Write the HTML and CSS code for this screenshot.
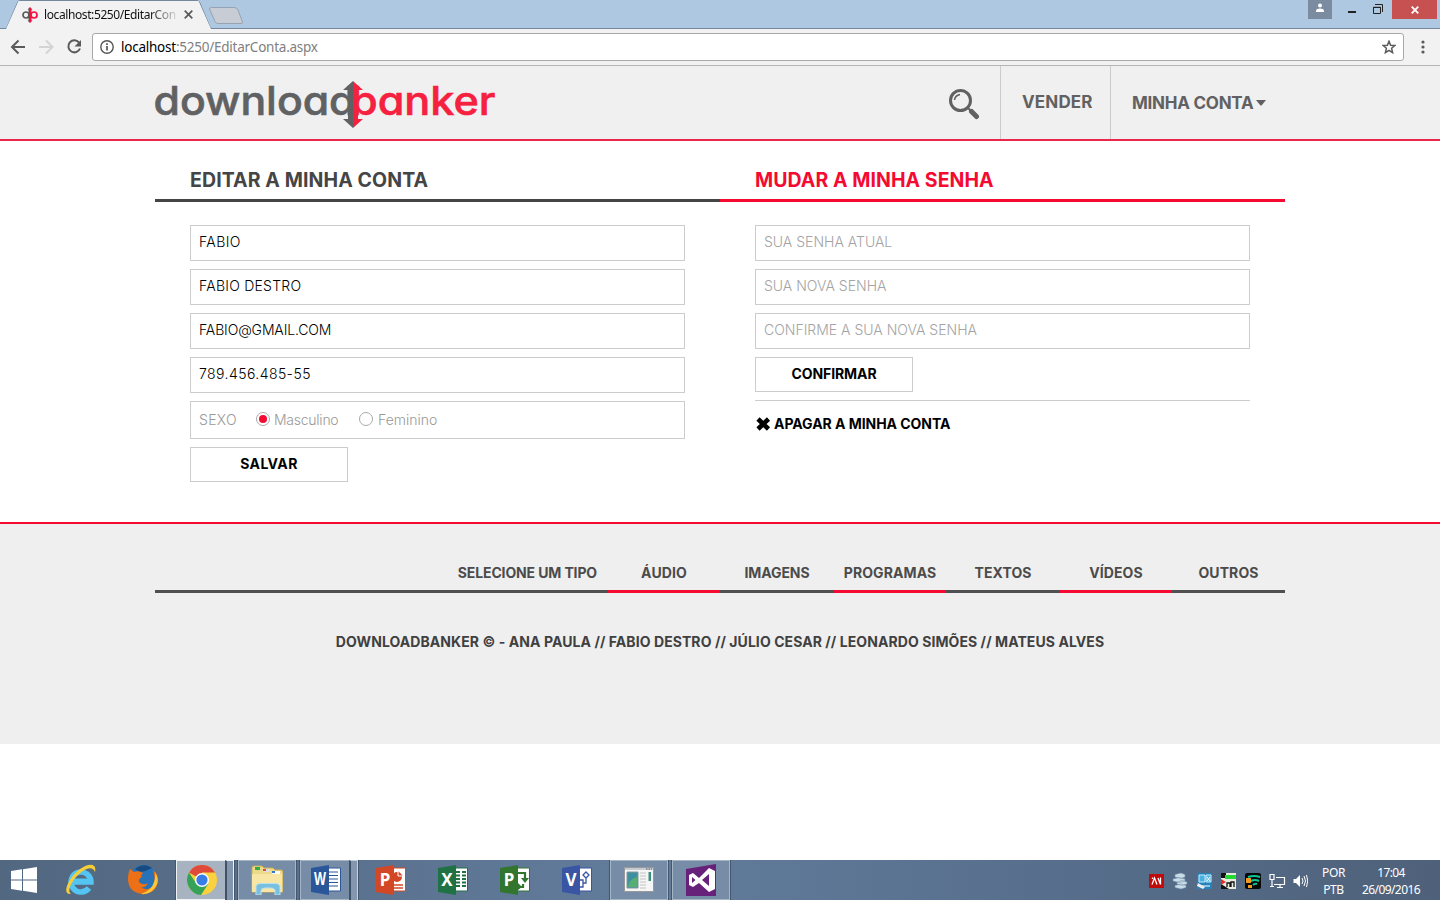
FILE: index.html
```html
<!DOCTYPE html>
<html lang="pt-BR">
<head>
<meta charset="utf-8">
<title>Editar Conta</title>
<link rel="stylesheet" href="styles.css">
</head>
<body>
<div class="tabstrip">
  <svg class="tabshape" width="250" height="29" viewBox="0 0 250 29"><path d="M0 28.5H5.500Q6.500 28.500 7 27L17.500 2.500Q18 .5 20 .5H197Q199 .5 199.700 2.500L210 27Q210.500 28.500 212 28.500H250" fill="none" stroke="#75869f"/><path d="M0 29H6L18.500 1H198.500L211 29Z" fill="#f2f2f2"/><path d="M211.500 7.500H234Q237 7.500 238 10L242.500 22Q243 23.500 241 23.500H218Q216 23.500 215 21.500L209.500 9Q209 7.500 211.500 7.500Z" fill="#c7ccd5" stroke="#97a2b3"/></svg>
  <div class="tab">
    <svg class="fav" width="16" height="16" viewBox="0 0 16 16"><circle cx="4" cy="8" r="3" fill="none" stroke="#58595b" stroke-width="1.700"/><circle cx="12" cy="8" r="3" fill="none" stroke="#f5123f" stroke-width="1.700"/><path d="M8 0L5.500 2.500H6.500V13.500H5.500L8 16Z" fill="#58595b"/><path d="M8 0L10.500 2.500H9.500V13.500H10.500L8 16Z" fill="#f5123f"/></svg>
    <span class="tabtitle">localhost:5250/EditarCon</span>
    <svg width="9" height="9" viewBox="0 0 9 9"><path d="M.7.7L8.300 8.300M8.300.7L.7 8.300" stroke="#5a5a5a" stroke-width="1.700"/></svg>
  </div>
  <div class="winbtns">
    <span class="user"><svg width="10" height="10" viewBox="0 0 10 10"><circle cx="5" cy="2.500" r="2" fill="#fff"/><path d="M1 9V7.500Q1.500 5.500 5 5.500T9 7.500V9Z" fill="#fff"/></svg></span>
    <svg width="60" height="19" viewBox="0 0 60 19"><path d="M16 12h8" stroke="#222" stroke-width="2"/><path d="M41.500 7.500h7v6h-7zM41 7.300h8M43 4.500H50.500V12" fill="none" stroke="#222"/></svg>
    <span class="close"><svg width="8" height="8" viewBox="0 0 8 8"><path d="M.7.7L7.300 7.300M7.300.7L.7 7.300" stroke="#fff" stroke-width="1.800"/></svg></span>
  </div>
</div>
<div class="toolbar">
  <svg width="84" height="20" viewBox="0 0 84 20" fill="none" stroke-width="2"><path d="M25 10H12.500M18.500 3.500L12 10L18.500 16.500" stroke="#5a5a5a"/><path d="M39 10H52M46 3.500L52.500 10L46 16.500" stroke="#d4d4d4"/><path d="M79 5.500A6 6 0 1 0 80 11.500" stroke="#5a5a5a"/><path d="M81 3V9.500H74.500Z" fill="#5a5a5a"/></svg>
  <div class="address">
    <svg width="14" height="14" viewBox="0 0 14 14"><circle cx="7" cy="7" r="6.200" fill="none" stroke="#555" stroke-width="1.400"/><path d="M7 6v4.500M7 3.300V4.900" stroke="#555" stroke-width="1.700"/></svg>
    <span class="url">localhost<i>:5250/EditarConta.aspx</i></span>
    <svg width="14" height="14" viewBox="0 0 14 14"><path d="M7 1.300L8.600 5.200L12.900 5.500L9.600 8.300L10.600 12.600L7 10.300L3.400 12.600L4.400 8.300L1.100 5.500L5.400 5.200Z" fill="none" stroke="#5a5a5a" stroke-width="1.500"/></svg>
  </div>
  <svg class="menu" width="4" height="14" viewBox="0 0 4 14" fill="#5a5a5a"><circle cx="2" cy="2" r="1.600"/><circle cx="2" cy="7" r="1.600"/><circle cx="2" cy="12" r="1.600"/></svg>
</div>

<header class="header"><div class="wrap head">
  <svg class="logo" width="345" height="73" viewBox="155 66 345 73">
    <text class="logotext" x="153.500" y="115" textLength="202" lengthAdjust="spacingAndGlyphs" fill="#606163" stroke="#606163">download</text>
    <text class="logotext" x="351" y="115" textLength="144.500" lengthAdjust="spacingAndGlyphs" fill="#f6203f" stroke="#f6203f">banker</text>
    <path d="M353 81L343 90H348V119H343L353 128Z" fill="#606163"/><path d="M353 81L363 90H358V119H363L353 128Z" fill="#f6203f"/>
  </svg>
  <nav class="topnav">
    <a class="search"><svg width="32" height="32" viewBox="0 0 32 32"><circle cx="12.500" cy="12.500" r="10" fill="none" stroke="#616161" stroke-width="3"/><path d="M6.500 12Q7 7.500 12 6.500" fill="none" stroke="#616161" stroke-width="1.600"/><path d="M20 20L23 23" stroke="#616161" stroke-width="2"/><path d="M23.500 23.500L28.500 28.500" stroke="#616161" stroke-width="5" stroke-linecap="round"/></svg></a>
    <a class="sell">VENDER</a>
    <a class="account"><span>MINHA CONTA</span><svg width="10" height="6" viewBox="0 0 10 6"><path d="M0 0H10L5.500 5.500H4.500Z" fill="#616161"/></svg></a>
  </nav>
</div></header>

<main class="wrap cols">
  <section class="col">
    <h2 class="t1"><span>EDITAR A MINHA CONTA</span></h2>
    <form class="form">
      <input class="i1" value="FABIO">
      <input class="i2" value="FABIO DESTRO">
      <input class="i3" value="FABIO@GMAIL.COM">
      <input class="i4" value="789.456.485-55">
      <div class="sex"><span class="lab">SEXO</span><span class="radio on"></span><span class="masc">Masculino</span><span class="radio"></span><span class="fem">Feminino</span></div>
      <button type="button" class="save">SALVAR</button>
    </form>
  </section>
  <section class="col">
    <h2 class="t2"><span>MUDAR A MINHA SENHA</span></h2>
    <form class="form">
      <input class="i5" placeholder="SUA SENHA ATUAL">
      <input class="i6" placeholder="SUA NOVA SENHA">
      <input class="i7" placeholder="CONFIRME A SUA NOVA SENHA">
      <button type="button" class="confirm">CONFIRMAR</button>
      <div class="delete"><svg width="16" height="14" viewBox="0 0 16 14"><path d="M3 2L13.500 12M13.500 2L3 12" stroke="#000" stroke-width="4.600"/></svg><span>APAGAR A MINHA CONTA</span></div>
    </form>
  </section>
</main>

<footer class="footer"><div class="wrap">
  <nav class="types"><a class="f0"><span>SELECIONE UM TIPO</span></a><a class="f1"><span>ÁUDIO</span></a><a class="f2"><span>IMAGENS</span></a><a class="f3"><span>PROGRAMAS</span></a><a class="f4"><span>TEXTOS</span></a><a class="f5"><span>VÍDEOS</span></a><a class="f6"><span>OUTROS</span></a></nav>
  <p class="credits">DOWNLOADBANKER © - ANA PAULA // FABIO DESTRO // JÚLIO CESAR // LEONARDO SIMÕES // MATEUS ALVES</p>
</div></footer>

<div class="taskbar">
  <div class="apps">
    <span class="app start"><svg width="26" height="26" viewBox="0 0 26 26" fill="#fff"><path d="M0 4L11 2.300V12.500H0ZM12 2.200L26 0V12.500H12ZM0 13.500H11V23.700L0 22ZM12 13.500H26V26L12 23.800Z"/></svg></span>
    <span class="app"><svg width="32" height="32" viewBox="0 0 32 32"><path d="M8 18H26A10 10 0 1 0 24 24" fill="none" stroke="#54c5f2" stroke-width="5.500"/><path d="M8 16.500H26" stroke="#54c5f2" stroke-width="4"/><path d="M6 30C-4 31 3 14 15 5C24-1 32-1 30 8C28 2 22 4 17 7.500C8 14 1 27 6 30Z" fill="#f8ce37"/></svg></span>
    <span class="app"><svg width="32" height="32" viewBox="0 0 32 32"><circle cx="16.500" cy="14" r="13" fill="#2872b8"/><path d="M8 5Q17-2 25 4Q20 7 13 8Z" fill="#174b82"/><path d="M3 5L7 8Q12 6 16 9Q13 12 15 13Q11 15 12 18Q16 22 21 19Q19 24 14 23Q21 28 26 22Q29 15 26 6Q32 11 31 19Q28 30 16 30Q2 29 1 16Q1 9 3 5Z" fill="#ed7016"/><path d="M28 8Q34 17 27 25Q22 31 14 30Q25 26 27 18Q29 13 28 8Z" fill="#fbc638"/></svg></span>
    <span class="app active stack"><svg width="30" height="30" viewBox="0 0 30 30"><circle cx="15" cy="15" r="15" fill="#fbd23d"/><path d="M15 15L2 7.500A15 15 0 0 1 28 7.500H15Z" fill="#e04a3b"/><path d="M2 7.500A15 15 0 0 0 14 30L21.500 18.500L15 20L9 18Z" fill="#36a257"/><circle cx="15" cy="15" r="7" fill="#fff"/><circle cx="15" cy="15" r="5.600" fill="#397ee8"/></svg></span>
    <span class="app open"><svg width="32" height="30" viewBox="0 0 32 30"><path d="M1 3Q1 1 3 1H11L13 3H22L24 5H30Q32 5 32 7V27H1Z" fill="#ecd98a" stroke="#c9ad56"/><path d="M4 2H9V5H4Z" fill="#2fae45"/><path d="M12 4H19V7H12Z" fill="#ddd"/><path d="M12 4H15V6H12Z" fill="#dd4932"/><path d="M21 6H29V9H21Z" fill="#fff"/><path d="M21 6H24V8H21Z" fill="#3378c8"/><path d="M1 9H31V27H1Z" fill="#f7e6a4"/><path d="M5 30V21Q6 18.500 9 18.500H25Q28 18.500 29 21V30H24V25Q23 23 20 23H14Q10 23 10 26V30Z" fill="#79bfdf" stroke="#b9e2f1"/></svg></span>
    <span class="app open stack"><svg class="office" width="30" height="30" viewBox="0 0 30 30"><path d="M17 3H29.500V26H17Z" fill="#fff" stroke="#2a579a"/><path d="M18 7H27M18 10.500H27M18 14H27M18 17.500H27M18 21H27" stroke="#2a579a" stroke-width="1.200"/><path d="M0 3L18 0V30L0 27Z" fill="#2a579a"/><text x="9" y="20" textLength="12" lengthAdjust="spacingAndGlyphs">W</text></svg></span>
    <span class="app"><svg class="office" width="30" height="30" viewBox="0 0 30 30"><path d="M17 3H29.500V26H17Z" fill="#fff" stroke="#d24726"/><circle cx="21" cy="12" r="5" fill="#d24726"/><path d="M22 6V11H27" fill="#d24726" stroke="#fff"/><path d="M18 20H27M18 23H27" stroke="#d24726" stroke-width="1.500"/><path d="M0 3L18 0V30L0 27Z" fill="#d24726"/><text x="9" y="21">P</text></svg></span>
    <span class="app"><svg class="office" width="30" height="30" viewBox="0 0 30 30"><path d="M17 3H29.500V26H17Z" fill="#fff" stroke="#207245"/><path d="M18 7H22M24 7H28M18 10.500H22M24 10.500H28M18 14H22M24 14H28M18 17.500H22M24 17.500H28M18 21H22M24 21H28" stroke="#207245" stroke-width="2"/><path d="M0 3L18 0V30L0 27Z" fill="#207245"/><text x="9" y="21">X</text></svg></span>
    <span class="app"><svg class="office" width="30" height="30" viewBox="0 0 30 30"><path d="M17 3H29.500V26H17Z" fill="#fff" stroke="#31752f"/><path d="M18 8H25V14M18 22H23V19" fill="none" stroke="#31752f" stroke-width="2.200"/><path d="M21 13H29L25 18ZM18 18L22 22L18 25Z" fill="#31752f"/><path d="M0 3L18 0V30L0 27Z" fill="#31752f"/><text x="9" y="21">P</text></svg></span>
    <span class="app"><svg class="office" width="30" height="30" viewBox="0 0 30 30"><path d="M17 3H29.500V26H17Z" fill="#fff" stroke="#3955a3"/><path d="M24 7L27 10L24 13L21 10ZM24 13V18H21M17 15H21V22H17" fill="none" stroke="#3955a3" stroke-width="1.300"/><path d="M0 3L18 0V30L0 27Z" fill="#3955a3"/><text x="9" y="21">V</text></svg></span>
    <span class="app open"><svg width="30" height="26" viewBox="0 0 30 26"><path d="M.5.5H29.500V24.500H.5Z" fill="#f5f5f5" stroke="#999"/><path d="M1 2H29" stroke="#c4cbd1" stroke-width="2"/><path d="M22 2H28" stroke="#4d6172" stroke-dasharray="1.500 1"/><path d="M3 5H14V21H3Z" fill="#3e8f9f" stroke="#8996a0"/><path d="M4 20Q5 12 13 10V20Z" fill="#55ae72"/><path d="M16 6H22M16 9H22M16 12H22M16 15H22M16 18H22M16 21H22" stroke="#c4c4c4"/><path d="M24.500 5H27V14H24.500Z" fill="#3c8f7b"/></svg></span>
    <span class="app open"><svg width="30" height="32" viewBox="0 0 30 32"><path d="M0 5L30 0V32H0Z" fill="#68217a"/><path d="M3 11L7 9L13 14L23 4L29 7V25L23 28L13 19L7 23L3 21ZM6 13V19L9.500 16ZM16 16L23 22V10Z" fill="#fff" fill-rule="evenodd"/></svg></span>
  </div>
  <div class="tray">
    <svg width="160" height="18" viewBox="0 0 160 18"><path d="M1 2H16V16H1Z" fill="#c00b0b"/><path d="M4 12.500L6.500 6L9 12.500M10 6L12.500 12.500M4.500 5.500V7M12.500 5.500V12.500" fill="none" stroke="#fff" stroke-width="1.300"/><g fill="#c8dce8" stroke="#7390a6" stroke-width=".5"><path d="M27 2.500L33 1L37 2.500V5L33 6.500L27 5ZM25 7L31 5.500L37 7V9L31 10.500L25 9ZM29 10L34 8.500L39 10V12L34 13.500L29 12ZM27 13.500L33 12L38 13.500V15.500L33 17L27 15.500Z"/></g><path d="M49 1H64V17H49Z" fill="#2383bd"/><path d="M51 3H57V10H51ZM58 3H63V10H58Z" fill="#4aaede" stroke="#c9ecff"/><path d="M59 5L62 9M62 5L59 9M52 14H62" stroke="#fff"/><path d="M50 11L57 15L55 17L49 14Z" fill="#eee"/><path d="M73 1H88V17H73Z" fill="#e9e9df"/><path d="M73 1H78V6H73ZM73 12L81 17H73Z" fill="#111"/><path d="M77 3H88V7H77Z" fill="#23d933"/><path d="M73 7L78 10L73 13Z" fill="#e32c29"/><path d="M79 15V11H82V15M83 15V10H86V15" fill="none" stroke="#111" stroke-width="1.300"/><rect x="97" y="1" width="16" height="16" rx="2" fill="#080808"/><path d="M100 5Q106 3 112 5M103 9Q107 7 111 9M105 13Q107 11 109 12" fill="none" stroke="#10c493" stroke-width="2"/><path d="M98 6H103V11H98ZM100 13H104V16H100Z" fill="#ef9a20"/><path d="M124 7.500V14.500M122 2.500H126V7.500H122ZM128 5.500H136.500V12.500H126M132 13V16M129 15.500H135M122 14.500H126" fill="none" stroke="#fff" stroke-width="1.200"/><path d="M145.500 7H148L152 3V15L148 11H145.500Z" fill="#fff"/><path d="M154 6Q156 9 154 12M156 4Q159 9 156 14M158.500 3Q161 9 158.500 15" fill="none" stroke="#fff"/></svg>
    <div class="lang">POR<br>PTB</div><div class="clock">17:04<br>26/09/2016</div>
  </div>
</div>
</body>
</html>
```

FILE: styles.css
```css
* { box-sizing: border-box; }
body { margin: 0; width: 1440px; height: 900px; display: flex; flex-direction: column; background: #fff; font-family: Inter, "Open Sans", sans-serif; overflow: hidden; }
svg { display: block; flex: none; }
.tabstrip { height: 29px; flex: none; background: #afc8e2; border-bottom: 1px solid #75869f; display: flex; justify-content: space-between; position: relative; }
.tabshape { position: absolute; left: 0; top: 0; }
.tab { position: relative; display: flex; align-items: center; padding: 1px 0 0 22px; width: 206px; font: 12px "Noto Sans", sans-serif; letter-spacing: -.4px; }
.tabtitle { margin-left: 6px; width: 134px; margin-right: 6px; white-space: nowrap; color: transparent; background: linear-gradient(90deg, #111 105px, #1111 134px); -webkit-background-clip: text; background-clip: text; }
.winbtns { display: flex; height: 19px; margin-right: 3px; }
.user { width: 24px; background: #7b8ca0; display: grid; place-items: center; padding-bottom: 3px; }
.close { width: 45px; background: #c75050; display: grid; place-items: center; }
.toolbar { height: 37px; flex: none; background: #f2f2f2; border-bottom: 1px solid #b5b5b5; display: flex; align-items: center; }
.address { width: 1312px; height: 28px; margin: 0 0 0 8px; border: 1px solid #a9a9a9; border-radius: 3px; background: #fff; display: flex; align-items: center; padding: 0 7px; }
.url { flex: 1; margin-left: 7px; font: 13.500px "Noto Sans", sans-serif; letter-spacing: -.24px; }
.url i { font-style: normal; color: #808080; }
.menu { margin-left: 17px; }
.wrap { width: 1130px; margin: 0 auto; }
.header { height: 75px; flex: none; background: #f0f0f0; border-bottom: 2px solid #e8274b; }
.head { display: flex; justify-content: space-between; height: 73px; }
.logo { overflow: visible; }
.logotext { font: 500 40px Inter, sans-serif; font-feature-settings: "cv11"; stroke-width: .6px; }
.topnav { display: flex; color: #616161; font-size: 17px; font-weight: 700; }
.topnav a { display: flex; align-items: center; }
.search { padding: 2px 20px 0 0; }
.sell { width: 111px; border: solid #ccc; border-width: 0 1px; padding-left: 21px; letter-spacing: .15px; padding-bottom: 1px; }
.account { width: 174px; padding: 1px 0 0 21px; gap: 3px; letter-spacing: -.25px; }
.cols { display: grid; grid-template-columns: 1fr 1fr; height: 381px; flex: none; }
.col h2 { height: 61px; margin: 0; padding: 27px 35px 0; border-bottom: 3px solid #454545; font-size: 19.500px; line-height: 25px; font-weight: 700; color: #454545; white-space: nowrap; }
.col h2.t2 { color: #f50a32; border-color: #f50a32; }
.t1 { letter-spacing: .1px; }
.t2 { letter-spacing: .05px; }
.form { padding: 23px 35px 0; display: flex; flex-direction: column; gap: 8px; align-items: flex-start; }
.form input, .sex { width: 495px; height: 36px; border: 1px solid #ccc; padding: 0 8px 2px; font: 300 14px Inter, sans-serif; color: #000; outline: 0; border-radius: 0; }
.form input { padding-bottom: 3px; }
.form input::placeholder { color: #a4a4a4; opacity: 1; }
.form .i1 { letter-spacing: .4px; }
.form .i2 { letter-spacing: .25px; }
.form .i3 { letter-spacing: -.13px; }
.form .i4 { letter-spacing: .43px; }
.sex { height: 38px; color: #999; display: flex; align-items: center; }
.lab { width: 57px; letter-spacing: .3px; }
.radio { width: 14px; height: 14px; border: 1px solid #aaa; border-radius: 50%; margin-right: 5px; display: grid; place-items: center; }
.radio.on { margin-right: 4px; }
.radio.on::after { content: ""; width: 8px; height: 8px; border-radius: 50%; background: #f50a32; }
.masc { width: 85px; letter-spacing: -.25px; }
.form button { width: 158px; height: 35px; border: 1px solid #ccc; background: #fff; font: 700 14px Inter, sans-serif; padding: 0 0 2px; color: #000; }
.form .save { letter-spacing: .4px; }
.form .confirm { letter-spacing: -.08px; }
.delete { width: 495px; border-top: 1px solid #ccc; display: flex; align-items: center; gap: 3px; padding-top: 14px; font-size: 14px; line-height: 18px; font-weight: 700; letter-spacing: -.04px; }
.footer { height: 222px; flex: none; background: #efefef; border-top: 2px solid #f50a32; padding-top: 38px; font-size: 14px; font-weight: 700; color: #4b4b4b; }
.types { display: grid; grid-template-columns: 453px 112px 114px 112px 114px 112px 113px; height: 31px; }
.types a { border-bottom: 3px solid #505052; text-align: center; line-height: 22px; letter-spacing: .1px; }
.types .f0 { text-align: right; padding-right: 11px; letter-spacing: -.13px; }
.types .f1, .types .f3, .types .f5 { border-color: #f50a32; }
.types .f2 { letter-spacing: -.1px; }
.credits { margin: 39px 0 0; text-align: center; line-height: 20px; white-space: nowrap; color: #404040; letter-spacing: .075px; }
.taskbar { height: 40px; flex: none; margin-top: auto; background: linear-gradient(90deg, #526780, #627c9c 45%, #566e8b 75%, #4f617a); display: flex; justify-content: space-between; overflow: hidden; }
.apps { display: flex; gap: 4px; padding-left: 52px; }
.app { width: 58px; height: 40px; display: grid; place-items: center; position: relative; }
.start { width: 48px; margin-left: -52px; }
.open { background: #778da7; border: 1px solid #a6b5c6; outline: 1px solid #44576d; }
.active { background: #a8b3c1; border: 1px solid #f0f3f6; outline: 1px solid #44576d; }
.stack::after { content: ""; position: absolute; right: -1px; top: -1px; width: 6px; height: 40px; border: 1px solid #c7d0dc; border-left: 2px solid #40526a; background: #8496ad; }
.active::after { border-color: #f0f3f6; border-left-color: #40526a; }
.stack svg { margin-right: 7px; }
.office text { font: 700 17px "Noto Sans", sans-serif; fill: #fff; text-anchor: middle; }
.tray { display: flex; align-items: center; color: #fff; font: 12px/17px "Noto Sans", sans-serif; text-align: center; padding: 2px 17px 0 0; letter-spacing: -.6px; }
.lang { width: 43px; margin-left: 4px; letter-spacing: -.4px; }
.clock { width: 68px; padding-left: 4px; }
```
